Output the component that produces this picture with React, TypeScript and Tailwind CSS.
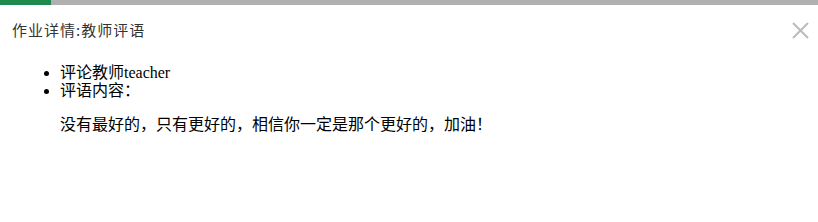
import React from 'react';

export default function App() {
  return (
    <div className="w-[818px] h-[222px] bg-white overflow-hidden">
      <div className="flex h-[5px]">
        <div className="w-[51px] bg-[#20894d]" />
        <div className="flex-1 bg-[#b0b0b0]" />
      </div>
      <div className="flex h-[50px] items-center justify-between pl-3 pr-[9px]">
        <h1
          className="text-[15px] text-[#333] tracking-[1px]"
          style={{ fontFamily: '"Noto Sans CJK SC", sans-serif' }}
        >
          作业详情:教师评语
        </h1>
        <svg width="17" height="17" viewBox="0 0 17 17" className="text-[#bbb]">
          <path d="M1 1L16 16M16 1L1 16" stroke="currentColor" strokeWidth="2" />
        </svg>
      </div>
      <div
        className="pt-[9px] text-[16px] leading-[18px] text-black"
        style={{ fontFamily: '"Liberation Serif", "Noto Sans CJK SC", serif' }}
      >
        <ul className="list-disc pl-[60px]">
          <li>评论教师teacher</li>
          <li>评语内容：</li>
        </ul>
        <p className="mt-4 pl-[60px]">没有最好的，只有更好的，相信你一定是那个更好的，加油！</p>
      </div>
    </div>
  );
}
